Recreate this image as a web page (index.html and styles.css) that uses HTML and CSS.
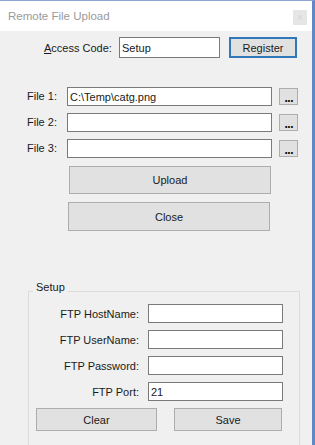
FILE: index.html
```html
<!DOCTYPE html>
<html lang="en">

<head>
    <meta charset="UTF-8">
    <meta name="viewport" content="width=device-width, initial-scale=1.0">
    <title>Remote File Upload</title>
    <link rel="stylesheet" href="styles.css">
</head>

<body>
    <div class="window">
        <div class="titlebar">
            <span class="title">Remote File Upload</span>
            <span class="close-box">×</span>
        </div>
        <div class="content">
            <div class="access-row">
                <label class="access-label"><u>A</u>ccess Code:</label>
                <input class="textbox access-input" type="text" value="Setup">
                <button class="btn register-btn">Register</button>
            </div>

            <div class="file-rows">
                <div class="file-row">
                    <label>File 1:</label>
                    <input class="textbox file-input" type="text" value="C:\Temp\catg.png">
                    <button class="btn dots-btn">...</button>
                </div>
                <div class="file-row">
                    <label>File 2:</label>
                    <input class="textbox file-input" type="text">
                    <button class="btn dots-btn">...</button>
                </div>
                <div class="file-row">
                    <label>File 3:</label>
                    <input class="textbox file-input" type="text">
                    <button class="btn dots-btn">...</button>
                </div>
            </div>

            <button class="btn wide-btn upload-btn">Upload</button>
            <button class="btn wide-btn close-btn">Close</button>

            <fieldset class="setup-group">
                <legend>Setup</legend>
                <div class="setup-row">
                    <label>FTP HostName:</label>
                    <input class="textbox setup-input" type="text">
                </div>
                <div class="setup-row">
                    <label>FTP UserName:</label>
                    <input class="textbox setup-input" type="text">
                </div>
                <div class="setup-row">
                    <label>FTP Password:</label>
                    <input class="textbox setup-input" type="password">
                </div>
                <div class="setup-row">
                    <label>FTP Port:</label>
                    <input class="textbox setup-input" type="text" value="21">
                </div>
                <div class="setup-buttons">
                    <button class="btn clear-btn">Clear</button>
                    <button class="btn save-btn">Save</button>
                </div>
            </fieldset>
        </div>
    </div>
</body>

</html>
```

FILE: styles.css
```css
body {
    margin: 0;
    padding: 0;
    font-family: "Liberation Sans", Arial, sans-serif;
    font-size: 11px;
    color: #1a1a1a;
    background-color: #f0f0f0;
}

.window {
    width: 312px;
    height: 444px;
    border-top: 1px solid #8aa6d0;
    border-right: 3px solid #5f88c4;
    background-color: #f0f0f0;
    overflow: hidden;
}

.titlebar {
    display: flex;
    align-items: center;
    justify-content: space-between;
    height: 30px;
    padding: 0 5px 0 8px;
    background-color: #fff;
}

.title {
    color: #9a9a9a;
    font-size: 11.5px;
}

.close-box {
    width: 14px;
    height: 15px;
    margin-top: 2px;
    background-color: #e6e6e6;
    color: #d4d4d4;
    font-size: 10px;
    line-height: 15px;
    text-align: center;
}

.content {
    padding-top: 6px;
}

.textbox {
    box-sizing: border-box;
    margin: 0;
    padding: 0 2px;
    border: 1px solid #7a7a7a;
    background-color: #fff;
    font-family: inherit;
    font-size: 11px;
    color: #1a1a1a;
    outline: none;
}

.btn {
    box-sizing: border-box;
    margin: 0;
    padding: 0;
    border: 1px solid #adadad;
    background-color: #e1e1e1;
    font-family: inherit;
    font-size: 11px;
    color: #1a1a1a;
}

.access-row {
    display: flex;
    align-items: center;
    height: 21px;
    padding-left: 44px;
}

.access-label {
    width: 75px;
}

.access-input {
    width: 101px;
    height: 21px;
}

.register-btn {
    width: 68px;
    height: 21px;
    margin-left: 9px;
    border: 2px solid #2f79b9;
}

.file-rows {
    display: flex;
    flex-direction: column;
    gap: 7px;
    margin-top: 29px;
}

.file-row {
    display: flex;
    align-items: flex-start;
    height: 19px;
    padding-left: 27px;
}

.file-row label {
    width: 40px;
    line-height: 19px;
}

.file-input {
    width: 205px;
    height: 19px;
}

.dots-btn {
    width: 19px;
    height: 17px;
    margin-left: 7px;
    margin-top: 1px;
    padding-top: 4px;
    font-family: "DejaVu Sans", sans-serif;
    font-weight: bold;
    font-size: 10px;
    line-height: 8px;
    letter-spacing: -1px;
    color: #111;
}

.wide-btn {
    display: block;
    width: 202px;
    height: 28px;
}

.upload-btn {
    margin: 8px 0 0 69px;
}

.close-btn {
    margin: 8px 0 0 68px;
    height: 29px;
}

.setup-group {
    box-sizing: border-box;
    width: 272px;
    height: 170px;
    margin: 50px 0 0 28px;
    padding: 3px 0 0 0;
    border: 1px solid #dcdcdc;
}

.setup-group legend {
    margin-left: 4px;
    padding: 0 3px 8px;
    line-height: 12px;
}

.setup-row {
    display: flex;
    align-items: center;
    height: 19px;
    margin-bottom: 7px;
}

.setup-row label {
    width: 110px;
    text-align: right;
}

.setup-input {
    width: 135px;
    height: 19px;
    margin-left: 9px;
}

.setup-buttons {
    display: flex;
    gap: 17px;
    padding-left: 7px;
    margin-top: 2px;
}

.clear-btn {
    width: 121px;
    height: 23px;
}

.save-btn {
    width: 108px;
    height: 23px;
}
```
